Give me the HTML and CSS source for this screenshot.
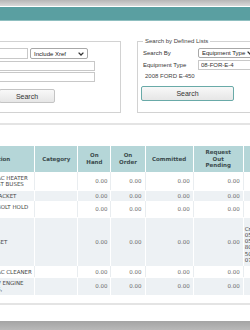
FILE: index.html
```html
<!DOCTYPE html>
<html lang="en">
<head>
  <title>Parts Inventory - Lookup</title>
  <link rel="stylesheet" href="styles.css">
</head>

<body>
  <!-- Header bars -->
  <div class="topbar"></div>
  <div class="titlebar"></div>

  <!-- Search panels -->
  <div class="search-area">
    <fieldset class="panel panel-part">
      <div class="row">
        <input class="field short" type="text">
        <div class="select xref">
          <span>Include Xref</span>
          <svg width="6" height="4" viewBox="0 0 6 4"><path d="M0.6 0.6 L3 3 L5.4 0.6" fill="none" stroke="#333" stroke-width="1.3"/></svg>
        </div>
      </div>
      <input class="field long" type="text">
      <input class="field long second" type="text">
      <button class="btn btn-plain">Search</button>
    </fieldset>

    <fieldset class="panel panel-lists">
      <legend>Search by Defined Lists</legend>
      <div class="form-grid">
        <label>Search By</label>
        <div class="select type">
          <span>Equipment Type</span>
          <svg width="6" height="4" viewBox="0 0 6 4"><path d="M0.6 0.6 L3 3 L5.4 0.6" fill="none" stroke="#333" stroke-width="1.3"/></svg>
        </div>
        <label>Equipment Type</label>
        <input class="field equip" type="text" value="08-FOR-E-4">
      </div>
      <div class="equip-name">2008 FORD E-450</div>
      <button class="btn btn-teal">Search</button>
    </fieldset>
  </div>

  <div class="divider"></div>

  <!-- Results -->
  <table class="results">
    <thead>
      <tr>
        <th class="c-desc">Description</th>
        <th class="c-cat">Category</th>
        <th class="c-hand">On<br>Hand</th>
        <th class="c-order">On<br>Order</th>
        <th class="c-comm">Committed</th>
        <th class="c-req">Request<br>Out<br>Pending</th>
        <th class="c-note">Notes</th>
      </tr>
    </thead>
    <tbody>
      <tr class="r1">
        <td class="desc">AC HEATER<br>ST BUSES</td>
        <td></td>
        <td class="num">0.00</td>
        <td class="num">0.00</td>
        <td class="num">0.00</td>
        <td class="num">0.00</td>
        <td></td>
      </tr>
      <tr class="r2 alt">
        <td class="desc">JACKET</td>
        <td></td>
        <td class="num">0.00</td>
        <td class="num">0.00</td>
        <td class="num">0.00</td>
        <td class="num">0.00</td>
        <td></td>
      </tr>
      <tr class="r3">
        <td class="desc top">BOLT HOLD</td>
        <td></td>
        <td class="num">0.00</td>
        <td class="num">0.00</td>
        <td class="num">0.00</td>
        <td class="num">0.00</td>
        <td></td>
      </tr>
      <tr class="r4 alt">
        <td class="desc">SET</td>
        <td></td>
        <td class="num">0.00</td>
        <td class="num">0.00</td>
        <td class="num">0.00</td>
        <td class="num">0.00</td>
        <td class="note">Cross Ref:<br>0512-334<br>0514-221<br>8012-550<br>5061-190<br>0733-402</td>
      </tr>
      <tr class="r5">
        <td class="desc">AC CLEANER</td>
        <td></td>
        <td class="num">0.00</td>
        <td class="num">0.00</td>
        <td class="num">0.00</td>
        <td class="num">0.00</td>
        <td></td>
      </tr>
      <tr class="r6 alt">
        <td class="desc">V ENGINE<br>S,</td>
        <td></td>
        <td class="num">0.00</td>
        <td class="num">0.00</td>
        <td class="num">0.00</td>
        <td class="num">0.00</td>
        <td></td>
      </tr>
    </tbody>
  </table>

  <div class="divider bottom"></div>
  <div class="footer"></div>
</body>
</html>
```

FILE: styles.css
```css
body {
  margin: 0;
  width: 250px;
  height: 330px;
  overflow: hidden;
  background-color: white;
  font-family: "Liberation Sans", Arial, sans-serif;
  color: #333;
}

/* Header bars */
.topbar {
  height: 6px;
  background: linear-gradient(#b6b6b6, #d9d9d9);
}

.titlebar {
  height: 13px;
  margin-top: 1px;
  background-color: #5a9fa1;
  border-bottom: 1px solid #8fbfc0;
}

/* Search panels */
.search-area {
  display: flex;
  align-items: flex-start;
  padding-top: 17px;
}

.panel {
  margin: 0;
  border: 1px solid #d2d2d2;
  box-sizing: border-box;
  font-size: 6px;
  flex-shrink: 0;
}

.panel-part {
  margin-top: 3px;
  margin-left: -70px;
  width: 191px;
  padding: 6px 0 9px 9px;
}

.panel-lists {
  margin-left: 16px;
  width: 160px;
  padding: 4px 0 11px 5px;
}

.panel-lists legend {
  padding: 0 2px;
  line-height: 6px;
  color: #444;
}

.row {
  display: flex;
  gap: 2px;
}

.field {
  display: block;
  box-sizing: border-box;
  height: 10px;
  margin: 0;
  padding: 0 2px;
  border: 1px solid #c8c8c8;
  background-color: white;
  font-family: inherit;
  font-size: 6px;
  color: #333;
}

.field.short {
  width: 88px;
  height: 11px;
}

.field.long {
  width: 155px;
  margin-top: 2px;
}

.field.second {
  margin-top: 1px;
}

.select {
  display: flex;
  align-items: center;
  justify-content: space-between;
  box-sizing: border-box;
  height: 11px;
  padding: 0 3px;
  border: 1px solid #a8a8a8;
  border-radius: 2px;
  background-color: white;
  color: #222;
  white-space: nowrap;
}

.select.xref {
  width: 58px;
}

.select.type {
  width: 59px;
  height: 10px;
}

.form-grid {
  display: grid;
  grid-template-columns: 55px auto;
  row-gap: 2px;
  align-items: center;
}

.form-grid label {
  color: #333;
  white-space: nowrap;
}

.field.equip {
  width: 62px;
}

.equip-name {
  margin: 3px 0 0 2px;
  line-height: 7px;
  color: #444;
}

.btn {
  display: block;
  box-sizing: border-box;
  font-family: inherit;
  font-size: 7px;
  color: #333;
  background: linear-gradient(#f8f8f8, #e6e6e6);
  border-radius: 2px;
  cursor: pointer;
}

.btn-plain {
  width: 56px;
  height: 14px;
  margin: 7px 0 0 59px;
  border: 1px solid #c4c4c4;
}

.btn-teal {
  width: 93px;
  height: 15px;
  margin: 6px 0 0 -2px;
  border: 1px solid #69aaa8;
}

/* Dividers */
.divider {
  height: 2px;
  margin-top: 10px;
  background-color: #e4e4e4;
}

.divider.bottom {
  margin-top: 8px;
}

/* Results table */
.results {
  margin-top: 21px;
  margin-left: -51px;
  border-collapse: separate;
  border-spacing: 1px 0;
  table-layout: fixed;
  width: 356px;
  font-family: "DejaVu Sans", Verdana, sans-serif;
  font-size: 5.5px;
}

.results th {
  box-sizing: border-box;
  height: 26px;
  padding: 0 2px;
  background-color: #b5d6d8;
  color: #3b4b4d;
  font-weight: bold;
  line-height: 6.6px;
  text-align: center;
  vertical-align: middle;
}

.c-desc { width: 84px; text-align: right !important; padding-right: 24px !important; }
.c-cat { width: 42px; }
.c-hand { width: 32px; }
.c-order { width: 33px; }
.c-comm { width: 47px; }
.c-req { width: 49px; }
.c-note { width: 60px; }

.results td {
  box-sizing: border-box;
  padding: 2px 3px 2px 3px;
  line-height: 6.3px;
  color: #444;
  vertical-align: middle;
  border-top: 1px solid white;
}

.results tr td + td {
  box-shadow: -1px 0 0 #e9edf0;
}

.results tr.alt td {
  background-color: #edf1f4;
}

.results tr.alt td + td {
  box-shadow: -1px 0 0 white;
}

.results td.desc {
  padding-left: 47px;
  white-space: nowrap;
  overflow: hidden;
}

.results td.top {
  vertical-align: top;
}

.results td.num {
  text-align: right;
  color: #666;
}

.results td.note {
  padding: 7px 0 2px 1px;
  white-space: nowrap;
  color: #444;
}

.r1 td { height: 17px; }
.r2 td { height: 10px; }
.r3 td { height: 16px; }
.r4 td { height: 49px; }
.r5 td { height: 11px; }
.r6 td { height: 16px; }

/* Footer */
.footer {
  height: 14px;
  margin-top: 16px;
  background: linear-gradient(#a4a4a4, #c4c4c4);
}
```
